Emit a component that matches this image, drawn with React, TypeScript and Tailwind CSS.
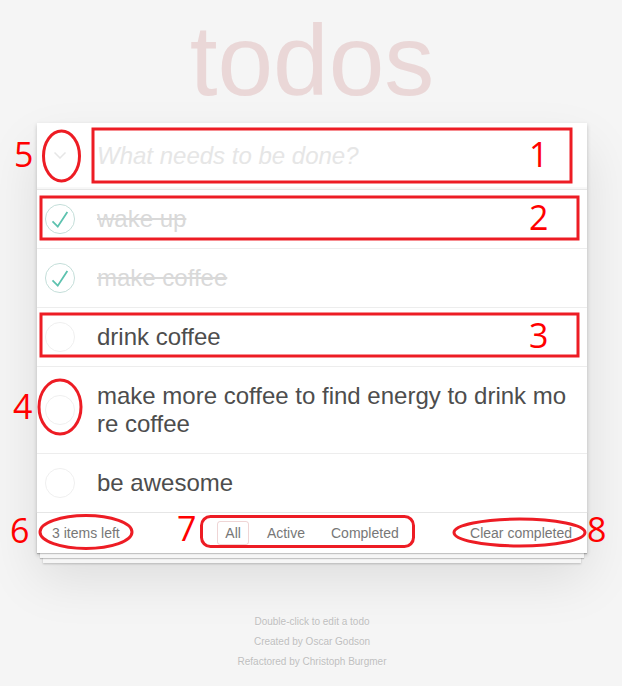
import React from 'react';

type Todo = { title: string; done: boolean };

const TODOS: Todo[] = [
  { title: 'wake up', done: true },
  { title: 'make coffee', done: true },
  { title: 'drink coffee', done: false },
  { title: 'make more coffee to find energy to drink more coffee', done: false },
  { title: 'be awesome', done: false },
];

function Toggle({ done }: { done: boolean }) {
  return (
    <svg width="30" height="30" viewBox="0 0 100 100" className="block">
      <circle cx="50" cy="50" r="48.5" fill="none" stroke={done ? '#bddad5' : '#ededed'} strokeWidth="3" />
      {done ? <path d="M72 25L42 71 27 56l-4 4 20 20 34-52z" fill="#5dc2af" /> : null}
    </svg>
  );
}

// red markup drawn over the screenshot
function Annotations() {
  const red = '#ed1c24';
  const digits: [string, number, number][] = [
    ['1', 529, 167],
    ['2', 529, 230],
    ['3', 529, 348],
    ['4', 13, 419],
    ['5', 14, 167],
    ['6', 10, 543],
    ['7', 177, 541],
    ['8', 587, 542],
  ];
  return (
    <svg
      width="622"
      height="686"
      viewBox="0 0 622 686"
      className="pointer-events-none absolute left-0 top-0"
    >
      <g fill="none" stroke={red} strokeWidth="3">
        <rect x="93" y="129" width="478" height="53" />
        <rect x="41" y="197" width="537" height="42" />
        <rect x="41" y="314" width="537" height="42" />
        <ellipse cx="61.5" cy="156" rx="18" ry="25" />
        <ellipse cx="60" cy="407" rx="21" ry="27" />
        <ellipse cx="86" cy="532" rx="46" ry="16.5" />
        <rect x="201.5" y="516.5" width="212" height="30" rx="9" />
        <ellipse cx="519.5" cy="532.5" rx="65.5" ry="13.5" />
      </g>
      <g fill="#ff0000" fontFamily="'Open Sans', 'Noto Sans', sans-serif" fontSize="34">
        {digits.map(([d, x, y]) => (
          <text key={d} x={x} y={y}>
            {d}
          </text>
        ))}
      </g>
    </svg>
  );
}

export default function App() {
  const left = TODOS.filter((t) => !t.done).length;

  return (
    <div className="relative min-h-[686px] bg-[#f5f5f5] pl-[2px] font-['Liberation_Sans',Arial,sans-serif] text-sm text-[#4d4d4d]">
      <h1 className="pb-[13px] pt-[10px] text-center text-[100px] font-thin leading-[100px] text-[rgba(175,47,47,0.15)]">
        todos
      </h1>

      <section className="mx-auto w-[550px] bg-white shadow-[0_2px_4px_0_rgba(0,0,0,0.2),0_25px_50px_0_rgba(0,0,0,0.1)]">
        <header className="flex items-center shadow-[inset_0_-2px_1px_rgba(0,0,0,0.03)]">
          <div className="flex w-[60px] shrink-0 items-center pl-[17px]">
            <svg width="12" height="7" viewBox="0 0 12 7" className="block">
              <polyline points="0.5,0.5 6,6 11.5,0.5" fill="none" stroke="#e6e6e6" strokeWidth="1.5" />
            </svg>
          </div>
          <input
            type="text"
            placeholder="What needs to be done?"
            className="w-full bg-transparent py-4 pr-4 text-2xl leading-[1.4em] text-[#4d4d4d] outline-none placeholder:italic placeholder:text-[#e6e6e6]"
          />
        </header>

        <ul className="border-t border-[#e6e6e6]">
          {TODOS.map((todo) => (
            <li key={todo.title} className="flex items-center border-b border-[#ededed] last:border-b-0">
              <div className="flex w-[60px] shrink-0 items-center pl-2">
                <Toggle done={todo.done} />
              </div>
              <label
                className={
                  todo.done
                    ? 'block min-w-0 flex-1 break-all py-[15px] pr-[15px] text-2xl leading-[28px] text-[#d9d9d9] line-through'
                    : 'block min-w-0 flex-1 break-all py-[15px] pr-[15px] text-2xl leading-[28px] text-[#4d4d4d]'
                }
              >
                {todo.title}
              </label>
            </li>
          ))}
        </ul>

        <footer className="flex h-[41px] items-center border-t border-[#e6e6e6] px-[15px] text-[#777] shadow-[0_1px_1px_rgba(0,0,0,0.2),0_8px_0_-3px_#f6f6f6,0_9px_1px_-3px_rgba(0,0,0,0.2),0_16px_0_-6px_#f6f6f6,0_17px_2px_-6px_rgba(0,0,0,0.2)]">
          <span className="flex-1 leading-[20px]">{left} items left</span>
          <ul className="flex items-center gap-[10px]">
            <li className="rounded-[3px] border border-[rgba(175,47,47,0.2)] px-[7px] py-[3px] leading-[16px]">All</li>
            <li className="rounded-[3px] border border-transparent px-[7px] py-[3px] leading-[16px]">Active</li>
            <li className="rounded-[3px] border border-transparent px-[7px] py-[3px] leading-[16px]">Completed</li>
          </ul>
          <span className="flex-1 text-right leading-[20px]">Clear completed</span>
        </footer>
      </section>

      <div className="mt-[64px] flex flex-col items-center gap-[10px] text-[10px] leading-none text-[#bfbfbf] [text-shadow:0_1px_0_rgba(255,255,255,0.5)]">
        <p>Double-click to edit a todo</p>
        <p>Created by Oscar Godson</p>
        <p>Refactored by Christoph Burgmer</p>
      </div>

      <Annotations />
    </div>
  );
}
